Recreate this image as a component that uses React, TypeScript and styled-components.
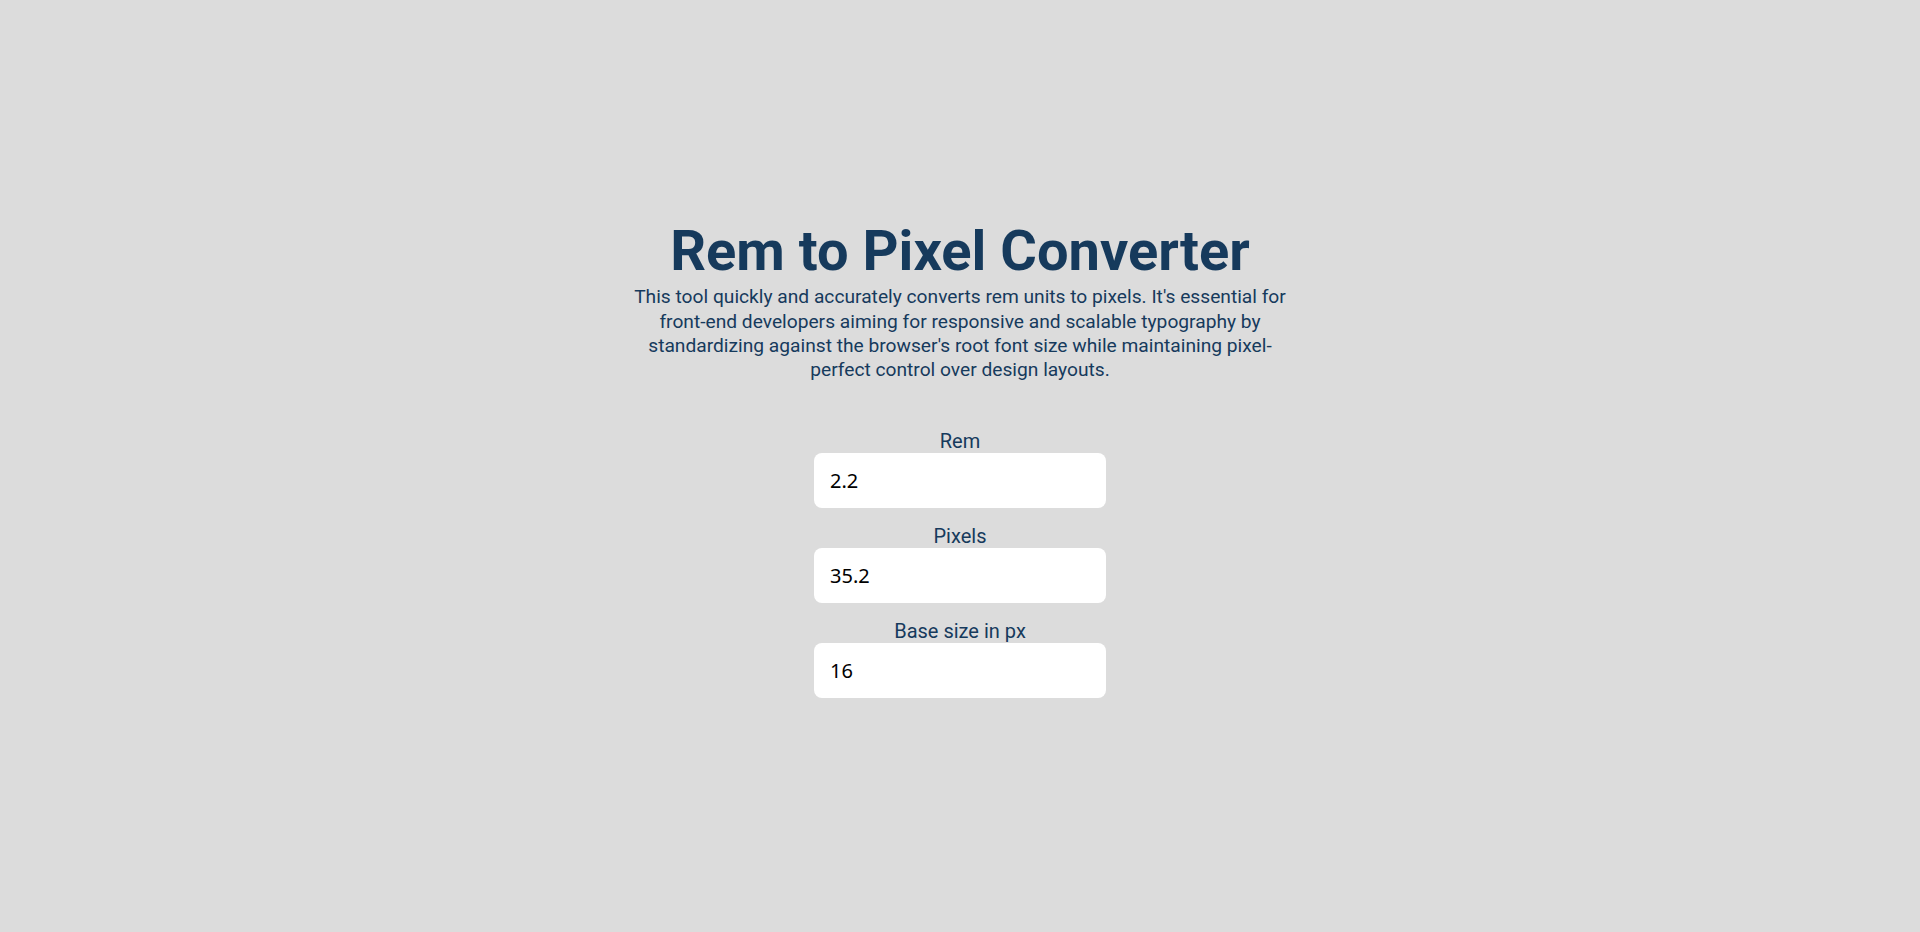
import { useState } from 'react';
import styled, { createGlobalStyle } from 'styled-components';

const GlobalStyle = createGlobalStyle`
    * {
        box-sizing: border-box;
    }
    body {
        margin: 0;
        background-color: #dcdcdc;
        font-family: Roboto, 'Liberation Sans', sans-serif;
    }
`;

const Page = styled.main`
    min-height: 100vh;
    display: flex;
    flex-direction: column;
    align-items: center;
    justify-content: center;
    color: #163a5c;
    text-align: center;
`;

const Title = styled.h1`
    margin: 0;
    font-size: 3.5rem;
    font-weight: 700;
    line-height: 67px;
`;

const Description = styled.p`
    margin: 0;
    max-width: 660px;
    font-size: 1.2rem;
    line-height: 24.4px;
`;

const Form = styled.form`
    margin-top: 46px;
    margin-bottom: 16px;
    display: flex;
    flex-direction: column;
    gap: 16px;
`;

const Field = styled.div`
    display: flex;
    flex-direction: column;
    align-items: center;
`;

const Label = styled.label`
    font-size: 1.25rem;
    line-height: 24px;
`;

const Input = styled.input`
    width: 292px;
    height: 55px;
    padding: 0 16px;
    border: none;
    border-radius: 8px;
    background-color: #ffffff;
    color: #000000;
    font-family: 'Noto Sans', 'Open Sans', sans-serif;
    font-size: 20px;
    outline: none;
`;

const format = (n: number) => (Number.isFinite(n) ? String(Math.round(n * 10000) / 10000) : '');

export default function App() {
    const [rem, setRem] = useState('2.2');
    const [px, setPx] = useState('35.2');
    const [base, setBase] = useState('16');

    const onRem = (v: string) => {
        setRem(v);
        setPx(format(parseFloat(v) * parseFloat(base)));
    };
    const onPx = (v: string) => {
        setPx(v);
        setRem(format(parseFloat(v) / parseFloat(base)));
    };
    const onBase = (v: string) => {
        setBase(v);
        setPx(format(parseFloat(rem) * parseFloat(v)));
    };

    return (
        <>
            <GlobalStyle />
            <Page>
                <Title>Rem to Pixel Converter</Title>
                <Description>
                    This tool quickly and accurately converts rem units to pixels. It's essential for
                    front-end developers aiming for responsive and scalable typography by standardizing
                    against the browser's root font size while maintaining pixel-perfect control over
                    design layouts.
                </Description>
                <Form onSubmit={(e) => e.preventDefault()}>
                    <Field>
                        <Label htmlFor="rem">Rem</Label>
                        <Input id="rem" value={rem} onChange={(e) => onRem(e.target.value)} />
                    </Field>
                    <Field>
                        <Label htmlFor="px">Pixels</Label>
                        <Input id="px" value={px} onChange={(e) => onPx(e.target.value)} />
                    </Field>
                    <Field>
                        <Label htmlFor="base">Base size in px</Label>
                        <Input id="base" value={base} onChange={(e) => onBase(e.target.value)} />
                    </Field>
                </Form>
            </Page>
        </>
    );
}
